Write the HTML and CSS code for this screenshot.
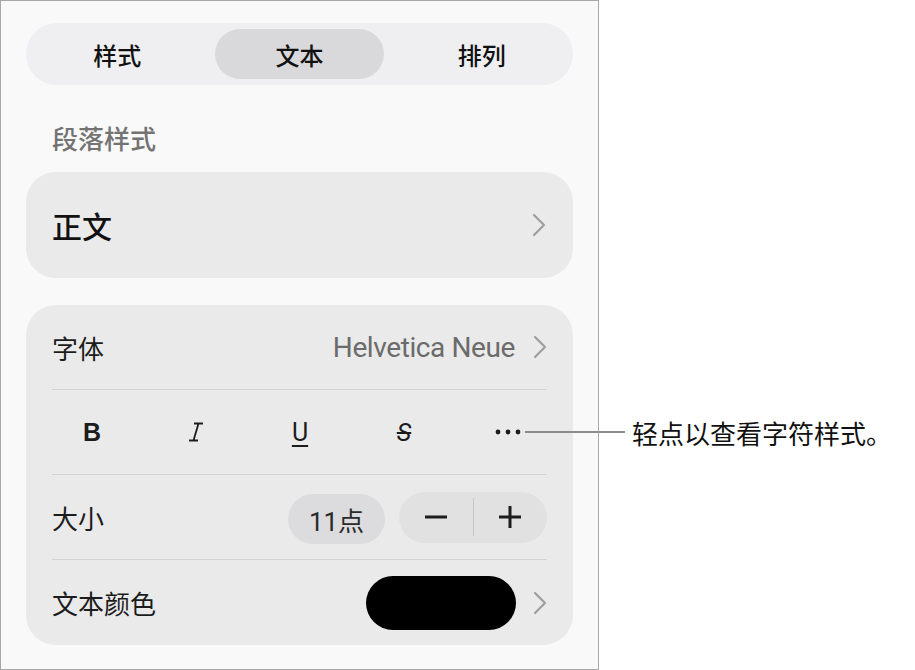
FILE: index.html
```html
<!DOCTYPE html>
<html lang="zh-CN">
<head>
    <meta charset="UTF-8">
    <meta name="viewport" content="width=device-width, initial-scale=1.0">
    <title>文本格式</title>
    <link rel="stylesheet" href="styles.css">
</head>
<body>
    <div class="page">
        <div class="panel">
            <div class="tabs">
                <div class="tab">样式</div>
                <div class="tab active">文本</div>
                <div class="tab">排列</div>
            </div>

            <div class="section-label">段落样式</div>
            <div class="card style-card">
                <span class="style-name">正文</span>
                <svg class="chevron" width="14" height="24" viewBox="0 0 14 24"><path d="M2 2 L12 12 L2 22"/></svg>
            </div>

            <div class="card list-card">
                <div class="row">
                    <span class="label">字体</span>
                    <span class="value">Helvetica Neue</span>
                    <svg class="chevron" width="14" height="24" viewBox="0 0 14 24"><path d="M2 2 L12 12 L2 22"/></svg>
                </div>
                <div class="row">
                    <div class="format-bar">
                        <span class="fmt bold">B</span>
                        <span class="fmt">
                            <svg width="16" height="20" viewBox="0 0 16 20" class="icon-italic"><path d="M6 1.5 H15 M1 18.5 H10 M10.5 1.5 L5.5 18.5"/></svg>
                        </span>
                        <span class="fmt under">U</span>
                        <span class="fmt strike">S</span>
                        <span class="fmt">
                            <svg width="26" height="6" viewBox="0 0 26 6" class="icon-more"><circle cx="3" cy="3" r="2.4"/><circle cx="13" cy="3" r="2.4"/><circle cx="23" cy="3" r="2.4"/></svg>
                        </span>
                    </div>
                </div>
                <div class="row">
                    <span class="label">大小</span>
                    <span class="size-pill">11点</span>
                    <div class="stepper">
                        <span class="step">
                            <svg width="22" height="22" viewBox="0 0 22 22"><path d="M0 11 H22"/></svg>
                        </span>
                        <span class="step-sep"></span>
                        <span class="step">
                            <svg width="22" height="22" viewBox="0 0 22 22"><path d="M0 11 H22 M11 0 V22"/></svg>
                        </span>
                    </div>
                </div>
                <div class="row">
                    <span class="label">文本颜色</span>
                    <span class="swatch"></span>
                    <svg class="chevron" width="14" height="24" viewBox="0 0 14 24"><path d="M2 2 L12 12 L2 22"/></svg>
                </div>
            </div>
        </div>

        <div class="callout">
            <span class="leader"></span>
            <span class="callout-text">轻点以查看字符样式。</span>
        </div>
    </div>
</body>
</html>
```

FILE: styles.css
```css
body {
    margin: 0;
    background: #fff;
    font-family: Roboto, "Noto Sans CJK SC", sans-serif;
    color: #1c1c1c;
}
.page {
    position: relative;
    width: 915px;
    height: 670px;
}
.panel {
    box-sizing: border-box;
    width: 599px;
    height: 670px;
    border: 1px solid #a8a8a8;
    background: #f9f9f9;
    padding: 22px 25px 0 25px;
}
.tabs {
    display: grid;
    grid-template-columns: 1fr 1fr 1fr;
    height: 62px;
    border-radius: 31px;
    background: #efeff1;
}
.tab {
    display: flex;
    align-items: center;
    justify-content: center;
    font-size: 24px;
    font-weight: 500;
    color: #111;
}
.tab.active {
    margin: 6px 7px;
    border-radius: 25px;
    background: #d9d9db;
}
.section-label {
    margin-top: 40px;
    padding-left: 26px;
    height: 30px;
    line-height: 30px;
    font-size: 26px;
    font-weight: 500;
    color: #737373;
}
.card {
    background: #eaeaea;
    border-radius: 30px;
}
.style-card {
    margin-top: 17px;
    height: 106px;
    display: flex;
    align-items: center;
    justify-content: space-between;
    padding: 0 27px 0 26px;
}
.style-name {
    font-size: 30px;
    font-weight: 500;
    color: #111;
}
.chevron path {
    fill: none;
    stroke: #9e9e9e;
    stroke-width: 2.2;
    stroke-linecap: round;
    stroke-linejoin: round;
}
.list-card {
    margin-top: 27px;
}
.row {
    box-sizing: border-box;
    height: 85px;
    margin: 0 26px;
    border-bottom: 1px solid #d3d3d3;
    display: flex;
    align-items: center;
}
.row:last-child {
    border-bottom: none;
}
.label {
    font-size: 26px;
    color: #1c1c1c;
    flex: 1;
}
.value {
    font-size: 28px;
    letter-spacing: -0.4px;
    color: #6b6b6b;
    margin-right: 18px;
}
.format-bar {
    display: grid;
    grid-template-columns: repeat(5, 104px);
    margin: 0 -12px 0 -12px;
}
.fmt {
    display: flex;
    align-items: center;
    justify-content: center;
    height: 40px;
    font-size: 25px;
    color: #1c1c1c;
}
.fmt.bold {
    font-family: "Liberation Sans", sans-serif;
    font-weight: 700;
}
.fmt.under {
    text-decoration: underline;
    text-decoration-thickness: 2px;
    text-underline-offset: 4px;
}
.fmt.strike {
    font-style: italic;
    text-decoration: line-through;
    text-decoration-thickness: 2px;
}
.icon-italic path {
    fill: none;
    stroke: #1c1c1c;
    stroke-width: 1.8;
}
.icon-more circle {
    fill: #1c1c1c;
}
.size-pill {
    display: flex;
    align-items: center;
    justify-content: center;
    width: 97px;
    height: 50px;
    margin-top: 4px;
    border-radius: 25px;
    background: #dcdcde;
    font-size: 26px;
    color: #2a2a2a;
}
.stepper {
    display: flex;
    align-items: center;
    width: 148px;
    height: 51px;
    margin-left: 14px;
    border-radius: 26px;
    background: #e1e1e2;
}
.step {
    flex: 1;
    display: flex;
    align-items: center;
    justify-content: center;
}
.step path {
    stroke: #1c1c1c;
    stroke-width: 3;
}
.step-sep {
    width: 1px;
    height: 38px;
    background: #c6c6c6;
}
.swatch {
    width: 150px;
    height: 54px;
    border-radius: 27px;
    background: #000;
    margin-right: 17px;
}
.callout {
    position: absolute;
    left: 525px;
    top: 416px;
    height: 32px;
    display: flex;
    align-items: center;
}
.leader {
    width: 100px;
    height: 2px;
    background: #8c8c8c;
}
.callout-text {
    margin-left: 7px;
    font-size: 26px;
    color: #111;
}
```
